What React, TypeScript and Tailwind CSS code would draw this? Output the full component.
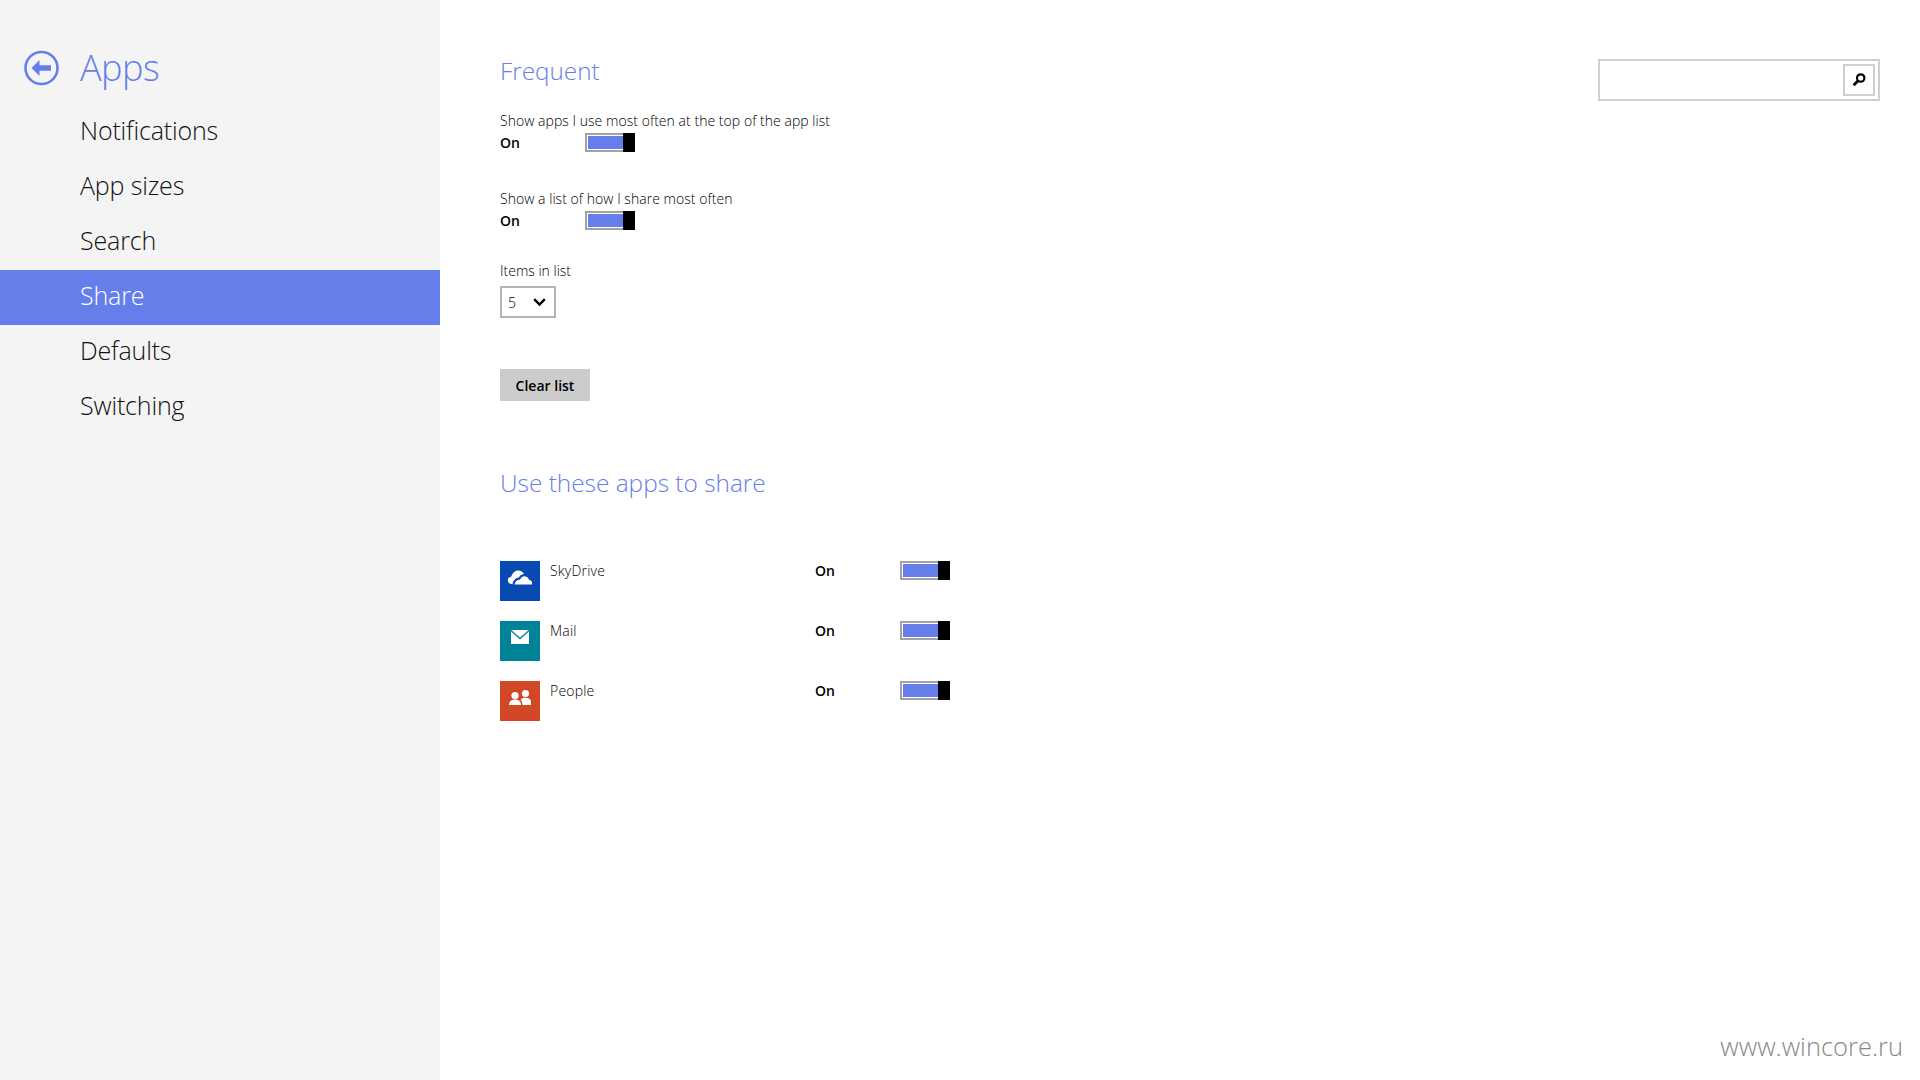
import React from 'react';

const navItems = ['Notifications', 'App sizes', 'Search', 'Share', 'Defaults', 'Switching'];

const BackIcon = () => (
  <svg width="36" height="36" viewBox="0 0 36 36" fill="none" className="shrink-0">
    <circle cx="17.5" cy="18" r="16" stroke="#667eea" strokeWidth="2.6" />
    <path d="M7.5 18 L15.5 10 V15.2 H27 V20.8 H15.5 V26 Z" fill="#667eea" />
  </svg>
);

const Toggle = () => (
  <div className="flex h-[19px] w-[50px] shrink-0">
    <div className="h-full flex-1 border-2 border-r-0 border-[#a3a3a3] bg-white">
      <div className="ml-px mt-px h-[13px] bg-[#667eea]" />
    </div>
    <div className="h-full w-3 bg-black" />
  </div>
);

const SkyDriveIcon = () => (
  <svg width="40" height="40" viewBox="0 0 40 40">
    <rect width="40" height="40" fill="#094ab2" />
    <path
      d="M12.5 23.2 c-2.4 -0.2 -4.7 -1.2 -4.7 -3.9 c0 -2.1 1.6 -3.4 3.4 -3.5 c1.2 -4 3.9 -6.4 7 -6.4 c2.6 0 4.6 1.3 5.8 3.5 c-2.5 0.2 -4.4 1.7 -5.1 3.6 c-3.4 0.2 -5.6 2.8 -6.4 6.7 z"
      fill="#fff"
    />
    <path
      d="M14.6 23.6 c0.4 -3 2.8 -5 5.4 -4.8 c0.7 -2.3 2.6 -3.8 4.9 -3.6 c2.2 0.2 3.7 1.7 4.2 3.7 c2 0.1 3 1.6 3 3.2 c0 0.6 -0.1 1 -0.3 1.5 z"
      fill="#fff"
    />
  </svg>
);

const MailIcon = () => (
  <svg width="40" height="40" viewBox="0 0 40 40">
    <rect width="40" height="40" fill="#008299" />
    <rect x="11" y="9" width="18" height="14" fill="#fff" />
    <path d="M11 9.6 L20 17.6 L29 9.6" fill="none" stroke="#008299" strokeWidth="1.3" />
  </svg>
);

const PeopleIcon = () => (
  <svg width="40" height="40" viewBox="0 0 40 40">
    <rect width="40" height="40" fill="#d24726" />
    <circle cx="15" cy="14.5" r="3.6" fill="#fff" />
    <path d="M9 24 c0 -4 2.6 -5.6 6 -5.6 s6 1.6 6 5.6 z" fill="#fff" />
    <circle cx="25.5" cy="12.5" r="3.6" fill="#fff" />
    <path d="M23 17 c4 -0.6 8 0.6 8 3.6 V24 h-8.6 c0 -2.6 -0.6 -4.2 -2 -5 z" fill="#fff" />
  </svg>
);

const apps = [
  { name: 'SkyDrive', icon: <SkyDriveIcon /> },
  { name: 'Mail', icon: <MailIcon /> },
  { name: 'People', icon: <PeopleIcon /> },
];

const Sidebar = () => (
  <aside className="h-[1080px] w-[440px] shrink-0 bg-[#f4f4f4] pt-[45px]">
    <div className="flex h-[45px] items-center pl-6">
      <BackIcon />
      <h1 className="ml-[20px] text-[36px] font-light leading-[45px] tracking-[-0.5px] text-[#667eea]">Apps</h1>
    </div>
    <nav className="mt-[15px]">
      {navItems.map((item) => (
        <div
          key={item}
          className={
            item === 'Share'
              ? 'flex h-[55px] items-center bg-[#667eea] pb-[3px] pl-[80px] text-[25px] font-light tracking-[-0.15px] text-white'
              : 'flex h-[55px] items-center pb-[3px] pl-[80px] text-[25px] font-light tracking-[-0.15px] text-[#111]'
          }
        >
          {item}
        </div>
      ))}
    </nav>
  </aside>
);

export default function App() {
  return (
    <div className="flex h-[1080px] w-[1920px] overflow-hidden bg-white font-['Open_Sans',sans-serif] text-black">
      <Sidebar />
      <main className="flex h-full flex-1 flex-col pl-[60px] pr-[17px]">
        <div className="flex justify-between">
          <div className="w-[400px] pt-[53px]">
            <h2 className="text-[24.3px] font-light leading-[36px] text-[#667eea]">Frequent</h2>
            <p className="mt-[22px] text-[14px] font-light leading-[20px] tracking-[0.04px] text-black">
              Show apps I use most often at the top of the app list
            </p>
            <div className="mt-[1px] flex h-[21px] items-center">
              <span className="w-[85px] text-[14px] font-semibold">On</span>
              <Toggle />
            </div>
            <p className="mt-[36px] text-[14px] font-light leading-[20px] tracking-[0.04px] text-black">
              Show a list of how I share most often
            </p>
            <div className="mt-[1px] flex h-[21px] items-center">
              <span className="w-[85px] text-[14px] font-semibold">On</span>
              <Toggle />
            </div>
          </div>
          <div className="mr-[23px] mt-[59px] flex h-[42px] w-[282px] items-center justify-end border-2 border-[#cfcfcf] bg-white pr-[3px]">
            <div className="flex h-8 w-8 items-center justify-center border-2 border-[#cfcfcf]">
              <svg width="16" height="16" viewBox="0 0 16 16" fill="none">
                <circle cx="9.7" cy="6" r="3.7" stroke="#000" strokeWidth="2.2" />
                <path d="M6.8 9 L2.6 13.2" stroke="#000" strokeWidth="2.8" />
              </svg>
            </div>
          </div>
        </div>

        <p className="mt-[30px] text-[14px] font-light leading-[20px] text-black">Items in list</p>
        <div className="mt-[5px] flex h-8 w-14 items-center justify-between border-2 border-[#b5b5b5] pl-[6px] pr-[8px]">
          <span className="text-[14px] font-light">5</span>
          <svg width="13" height="9" viewBox="0 0 13 9" fill="none">
            <path d="M1.2 1.2 L6.5 6.6 L11.8 1.2" stroke="#000" strokeWidth="2.4" />
          </svg>
        </div>
        <button className="mt-[51px] h-8 w-[90px] bg-[#cccccc] text-[14px] font-semibold text-black">
          Clear list
        </button>

        <h2 className="mt-[64px] text-[24.4px] font-light leading-[36px] text-[#667eea]">Use these apps to share</h2>

        <div className="mt-[60px] flex flex-col gap-5">
          {apps.map((app) => (
            <div key={app.name} className="flex h-10 items-start">
              {app.icon}
              <span className="ml-[10px] w-[265px] text-[14px] font-light leading-[19px] tracking-[0.2px] text-black">{app.name}</span>
              <span className="w-[85px] text-[14px] font-semibold leading-[19px]">On</span>
              <Toggle />
            </div>
          ))}
        </div>

        <div className="mb-[18px] mt-auto self-end text-[25.5px] font-light leading-[32px] text-[#888]">
          www.wincore.ru
        </div>
      </main>
    </div>
  );
}
